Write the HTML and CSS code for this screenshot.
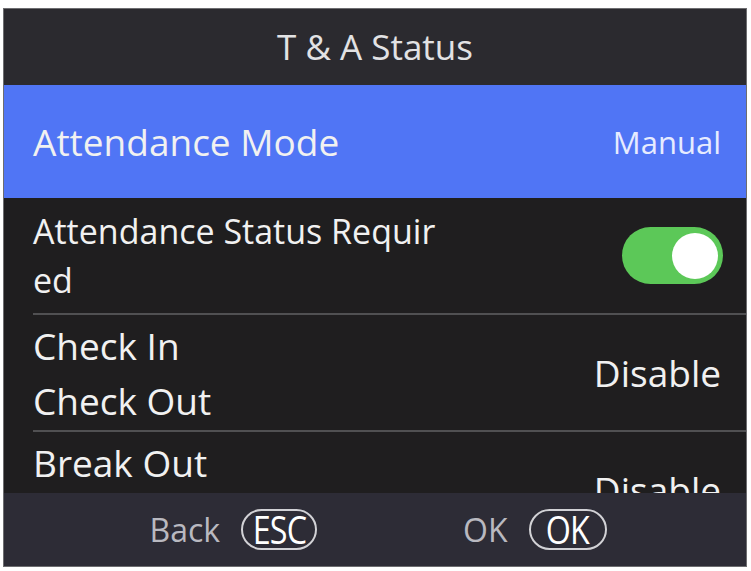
FILE: index.html
```html
<!DOCTYPE html>
<html lang="en">
<head>
  <meta charset="UTF-8">
  <meta name="viewport" content="width=device-width, initial-scale=1.0">
  <title>T &amp; A Status</title>
  <link rel="stylesheet" href="styles.css">
</head>
<body>
  <div class="screen">
    <!-- Title Bar -->
    <div class="header">T &amp; A Status</div>

    <!-- Settings List -->
    <div class="list">
      <div class="row active">
        <span class="label big">Attendance Mode</span>
        <span class="value small">Manual</span>
      </div>

      <div class="row">
        <div class="label multi">
          <span>Attendance Status Requir</span>
          <span>ed</span>
        </div>
        <div class="toggle on"><span class="knob"></span></div>
      </div>

      <div class="row">
        <div class="label multi big">
          <span>Check In</span>
          <span>Check Out</span>
        </div>
        <span class="value">Disable</span>
      </div>

      <div class="row">
        <div class="label multi big">
          <span>Break Out</span>
        </div>
        <span class="value">Disable</span>
      </div>
    </div>

    <!-- Key Hints -->
    <div class="footer">
      <div class="hint">
        <span>Back</span>
        <span class="key"><span>ESC</span></span>
      </div>
      <div class="hint">
        <span>OK</span>
        <span class="key ok"><span>OK</span></span>
      </div>
    </div>
  </div>
</body>
</html>
```

FILE: styles.css
```css
/* General Styling */
body {
  margin: 8px 4px 4px 3px;
  background-color: #ffffff;
  font-family: 'Open Sans', 'Noto Sans', sans-serif;
}
.screen {
  width: 742px;
  height: 557px;
  display: flex;
  flex-direction: column;
  background-color: #1f1e1f;
  border: 1px solid #6d6d70;
  overflow: hidden;
}
/* Title Bar */
.header {
  height: 74px;
  padding-bottom: 2px;
  flex-shrink: 0;
  display: flex;
  align-items: center;
  justify-content: center;
  background-color: #2b2a2f;
  color: #e2e2e4;
  font-size: 35px;
}
/* Settings List */
.list {
  flex: 1;
  overflow: hidden;
}
.row {
  height: 115px;
  margin-left: 29px;
  padding-right: 25px;
  display: flex;
  align-items: center;
  justify-content: space-between;
  border-bottom: 2px solid #505052;
  color: #f1f1f1;
}
.row.active {
  height: 113px;
  margin-left: 0;
  padding-left: 29px;
  background-color: #5075f5;
  border-bottom: none;
}
.label {
  font-size: 34px;
}
.label.big {
  font-size: 37px;
}
.multi {
  display: flex;
  flex-direction: column;
  line-height: 49px;
}
.multi.big {
  height: 110px;
  justify-content: flex-start;
  line-height: 55px;
}
.value {
  font-size: 37px;
}
.value.small {
  font-size: 31px;
  color: #e6ebff;
}
/* Toggle */
.toggle {
  width: 101px;
  height: 57px;
  margin-right: -2px;
  border-radius: 29px;
  background-color: #5cc858;
  display: flex;
  align-items: center;
  justify-content: flex-end;
  padding-right: 5px;
  box-sizing: border-box;
}
.knob {
  width: 46px;
  height: 46px;
  border-radius: 50%;
  background-color: #ffffff;
}
/* Footer */
.footer {
  height: 73px;
  padding-left: 6px;
  flex-shrink: 0;
  display: flex;
  align-items: center;
  justify-content: center;
  gap: 146px;
  background-color: #2d2c36;
  color: #b9b9c0;
  font-size: 32px;
}
.hint {
  display: flex;
  align-items: center;
  gap: 21px;
}
.key {
  width: 72px;
  height: 37px;
  border: 2px solid #d2d2d6;
  border-radius: 21px;
  display: flex;
  align-items: center;
  justify-content: center;
  color: #ffffff;
  font-size: 38px;
  line-height: 37px;
}
.key.ok {
  width: 74px;
}
.key span {
  display: inline-block;
  transform: scaleX(0.85);
  letter-spacing: -1px;
}
```
